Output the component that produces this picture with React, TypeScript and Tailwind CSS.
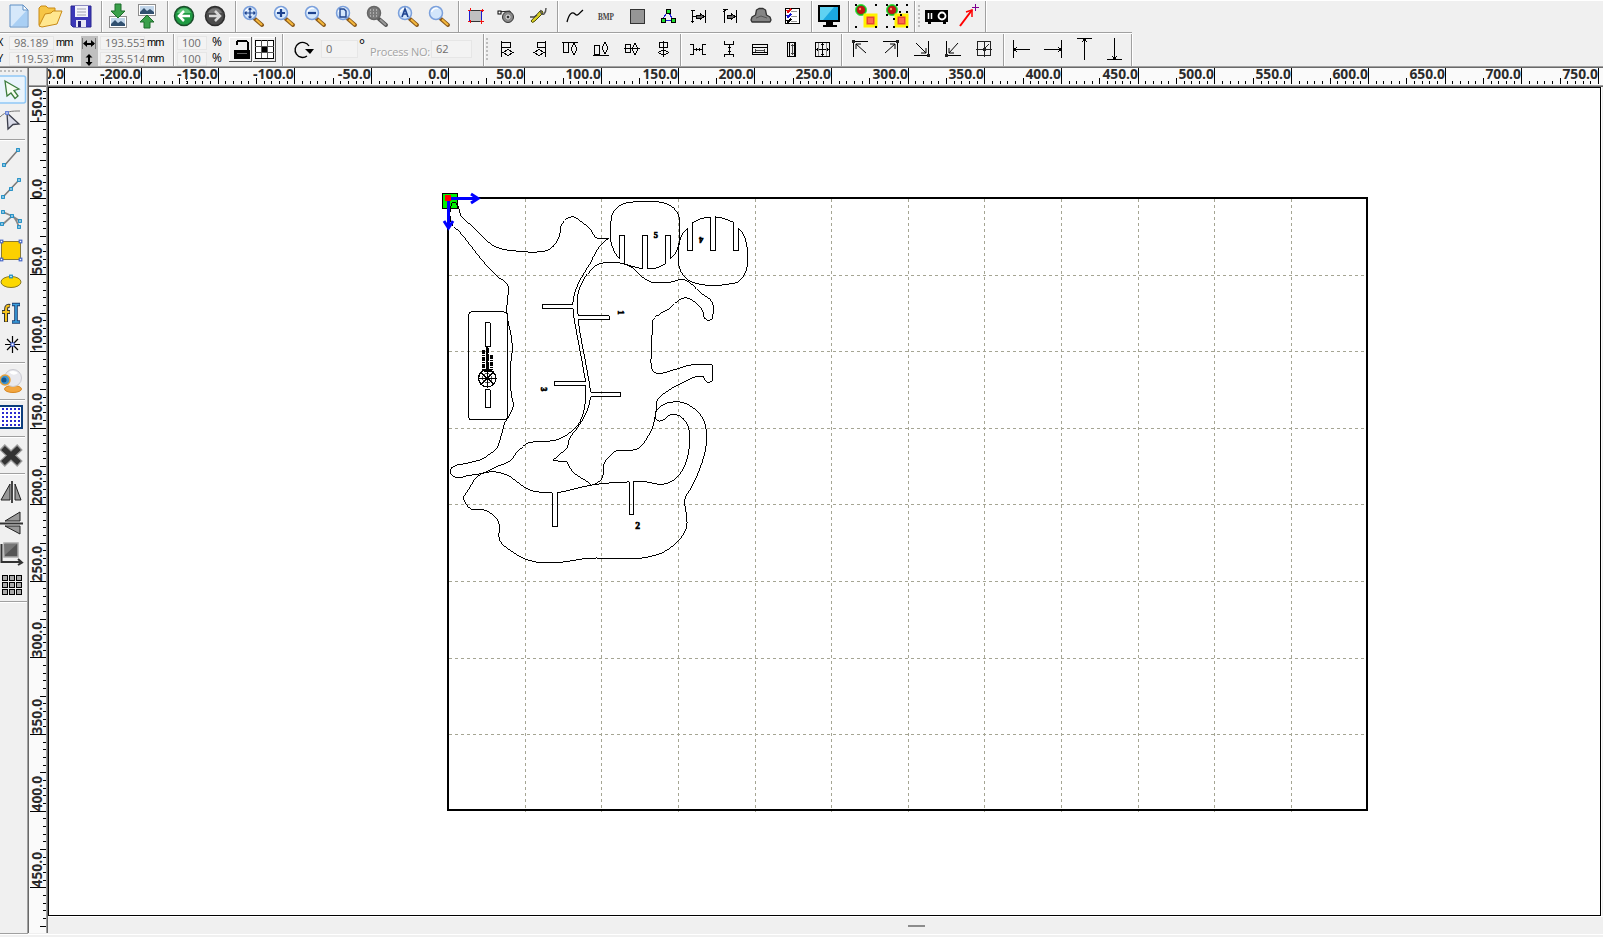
import type { ReactNode } from "react";

type Pt = [number, number];

/* Smooth closed outline through the points; sharp turns stay sharp. */
function outline(src: string): string {
  const p: Pt[] = src.trim().split(/\s+/).map((s) => s.split(",").map(Number) as Pt);
  const n = p.length;
  const dir: (Pt | null)[] = p.map((c, i) => {
    const a = p[(i - 1 + n) % n];
    const b = p[(i + 1) % n];
    const ux = c[0] - a[0], uy = c[1] - a[1], vx = b[0] - c[0], vy = b[1] - c[1];
    const lu = Math.hypot(ux, uy) || 1, lv = Math.hypot(vx, vy) || 1;
    const dot = (ux * vx + uy * vy) / (lu * lv);
    if (dot < 0.6) return null;
    const tx = ux / lu + vx / lv, ty = uy / lu + vy / lv;
    const lt = Math.hypot(tx, ty) || 1;
    return [tx / lt, ty / lt];
  });
  let d = `M${p[0][0]},${p[0][1]}`;
  for (let i = 0; i < n; i++) {
    const a = p[i], b = p[(i + 1) % n], da = dir[i], db = dir[(i + 1) % n];
    const l = Math.hypot(b[0] - a[0], b[1] - a[1]) / 3;
    const c1: Pt = da ? [a[0] + da[0] * l, a[1] + da[1] * l] : a;
    const c2: Pt = db ? [b[0] - db[0] * l, b[1] - db[1] * l] : b;
    d += `C${c1[0]},${c1[1]} ${c2[0]},${c2[1]} ${b[0]},${b[1]}`;
  }
  return d + "Z";
}

const PARTS = [
  "33,62 30,85 36,115 60,140 100,190 140,240 175,275 195,288 205,303 202,345 201,380 205,410 214,450 217,495 212,535 211,585 215,630 220,660 205,695 195,710 188,735 178,770 173,785 150,805 128,820 80,833 40,843 31,853 32,866 55,877 80,871 130,862 170,843 212,825 235,795 265,772 300,768 350,763 385,745 415,717 432,675 437,635 437,601 343,601 343,587 437,587 425,520 410,440 403,403 400,370 307,370 307,358 398,358 405,320 425,275 450,235 470,195 490,170 508,158 470,157 450,130 420,105 400,94 380,100 362,125 361,140 350,170 330,190 312,197 225,196 170,185 140,165 100,125 62,88 55,62 45,50 36,52",
  "415,391 413,330 430,285 455,250 485,233 545,233 575,245 600,268 630,288 660,292 700,288 722,282 740,285 780,320 817,350 817,400 805,406 792,395 788,375 765,350 740,337 720,342 690,368 640,402 637,440 634,500 639,555 650,563 700,553 755,538 817,538 817,585 807,592 797,585 790,572 765,574 740,585 685,615 650,647 650,665 645,695 638,725 620,760 600,785 582,793 530,796 510,810 492,835 488,875 470,893 455,899 440,887 400,860 380,828 338,825 355,810 382,785 388,760 410,730 430,700 447,660 452,633 542,633 542,620 452,620 447,585 435,520 420,440 415,403 508,403 508,391",
  "352,922 400,911 450,899 510,892 568,889 568,988 580,988 580,889 620,889 665,896 695,887 720,865 740,825 748,785 748,735 735,705 715,689 690,688 672,702 657,707 646,695 648,680 665,660 700,649 735,653 775,680 795,715 799,775 785,835 755,905 734,943 737,970 740,1025 720,1060 670,1100 620,1115 560,1120 440,1118 400,1125 330,1132 270,1125 215,1097 180,1065 177,1015 165,993 130,972 95,971 78,955 70,935 90,905 110,875 130,863 165,859 205,870 240,895 270,913 310,921 337,922 337,1024 352,1024",
  "538,219 522,195 512,160 513,110 520,80 545,57 580,49 655,49 695,62 716,90 719,130 718,170 705,205 692,219 692,149 676,149 676,234 650,247 622,250 622,149 608,149 608,250 580,243 553,234 553,149 538,149",
  "743,127 725,150 716,190 717,240 735,275 775,295 870,295 900,285 920,250 922,190 910,145 895,127 895,196 880,196 880,110 850,98 826,94 826,196 811,196 811,94 785,99 757,112 757,196 743,196",
  "136,412 151,412 151,484 136,484",
  "136,613 151,613 151,667 136,667",
];

const FONT = "'Open Sans','Noto Sans',sans-serif";

function labelWidth(s: string) {
  let w = 0;
  for (const c of s) w += c === "." ? 4 : c === "-" ? 5.5 : 7.9;
  return w;
}

function Ruler({ vertical }: { vertical?: boolean }) {
  const origin = vertical ? 198 : 448;
  const start = vertical ? 87 : 48;
  const size = vertical ? 846 : 1555;
  const step = vertical ? 7.66 : 7.667;
  const last = vertical ? 95 : 150;
  const ticks: ReactNode[] = [];
  for (let i = -60; i <= last; i++) {
    const p = Math.floor(origin + i * step + 0.3) - start;
    if (p < -1 || p > size + 50) continue;
    const len = i % 10 === 0 ? 16 : i % 5 === 0 ? 6 : 3;
    ticks.push(
      vertical ? (
        <rect key={i} x={17 - len} y={p} width={len} height={1} />
      ) : (
        <rect key={i} x={p} y={16 - len} width={1} height={len} />
      )
    );
    if (i % 10 === 0) {
      const s = (i * 5).toFixed(1);
      const w = labelWidth(s);
      ticks.push(
        vertical ? (
          <text key={`t${i}`} transform={`translate(12.5 ${p + 0.5}) rotate(-90)`} textLength={w} lengthAdjust="spacingAndGlyphs" fill="#2b2b2b">{s}</text>
        ) : (
          <text key={`t${i}`} x={p - w} y={11} textLength={w} lengthAdjust="spacingAndGlyphs" fill="#2b2b2b">{s}</text>
        )
      );
    }
  }
  return (
    <svg width={vertical ? 17 : 1555} height={vertical ? 846 : 17} className="block shrink-0 bg-[#fafafa]" fontFamily={FONT} fontSize="13.5" fontWeight="700" fill="#000">
      {ticks}
      {!vertical && <path d="M138.5 1V17" stroke="#333" strokeDasharray="1 1" />}
    </svg>
  );
}

/* ---------- toolbar pieces ---------- */

function Ico({ children, crisp }: { children: ReactNode; crisp?: boolean }) {
  return (
    <svg width="31" height="31" viewBox="-15 -15 31 31" className="block shrink-0" fill="none" stroke="#000" shapeRendering={crisp ? "crispEdges" : "auto"}>
      {children}
    </svg>
  );
}

function Side({ children, crisp }: { children: ReactNode; crisp?: boolean }) {
  return (
    <svg width="27" height="31" viewBox="-12 -15 27 31" className="block shrink-0" fill="none" stroke="#000" shapeRendering={crisp ? "crispEdges" : "auto"}>
      {children}
    </svg>
  );
}

function Sep() {
  return <div className="h-full w-[2px] shrink-0 border-l border-[#a0a0a0] bg-white" />;
}

function HSep() {
  return <div className="mt-[2px] mb-[2px] h-[2px] w-[25px] shrink-0 border-t border-[#a0a0a0] bg-white" />;
}

function Grip() {
  return (
    <svg width="4" height="31" className="block shrink-0">
      {[4, 8, 12, 16, 20, 24].map((y) => (
        <rect key={y} x="1" y={y} width="2" height="2" fill="#bdbdbd" />
      ))}
    </svg>
  );
}

function Lens({ gray, children }: { gray?: boolean; children?: ReactNode }) {
  return (
    <Ico>
      <path d="M2 3L9 9" stroke={gray ? "#555" : "#8b5a1a"} strokeWidth="4" strokeLinecap="round" />
      <path d="M3 3.500L9 9" stroke={gray ? "#999" : "#f5b83c"} strokeWidth="2" />
      <circle cx="-3" cy="-3" r="6.500" fill={gray ? "#7a7a7a" : "#d3e6fb"} stroke={gray ? "#666" : "#7ba0dc"} strokeWidth="1.500" />
      {!gray && <path d="M-7.500 -4A5 5 0 0 1 -1 -7.500" stroke="#fff" strokeWidth="1.300" />}
      {children}
    </Ico>
  );
}

function Photo({ y }: { y: number }) {
  return (
    <g transform={`translate(0 ${y})`} stroke="none">
      <rect x="-9" y="0" width="18" height="12" fill="#8d8d8d" />
      <rect x="-8" y="1" width="16" height="10" fill="#fff" />
      <rect x="-7" y="2" width="14" height="8" fill="#c2d6ea" />
      <path d="M-7 10V8L-3 4L0 7L3 5L7 8V10Z" fill="#31506f" />
    </g>
  );
}

function Cluster({ mark }: { mark?: boolean }) {
  return (
    <Ico>
      <circle cx="-5" cy="-6" r="5.500" fill="#17a51c" stroke="#3fe03f" />
      <circle cx="-5" cy="-6" r="4" fill="#c01313" stroke="none" />
      <circle cx="-6" cy="-7" r="1.200" fill="#ff8d6a" stroke="none" />
      <rect x="-1" y="-1" width="11" height="11" fill="#e8413a" stroke="#fff200" strokeWidth="3" />
      <rect x="2" y="2" width="5" height="5" fill="#ff6a50" stroke="none" />
      <g fill="#000" stroke="none">
        <path d="M-11 -12h2v2h-2zM9 -12h2v2h-2zM-11 10h2v2h-2zM9 10h2v2h-2z" />
        {mark && <path d="M-1 -12h2v2h-2zM-11 -2h2v2h-2zM-4 2h2v2h-2zM2 -5h2v2h-2zM9 -5h2v2h-2zM-4 10h2v2h-2zM3 -2h2v2h-2z" />}
      </g>
    </Ico>
  );
}

const Diamond = ({ x, y, rx, ry }: { x: number; y: number; rx: number; ry: number }) => (
  <path d={`M${x - rx} ${y}L${x} ${y - ry}L${x + rx} ${y}L${x} ${y + ry}Z`} />
);

function Field({ className, children }: { className: string; children: ReactNode }) {
  return (
    <div className={`overflow-hidden border border-[#e6e6e6] bg-[#f3f3f3] whitespace-nowrap text-[#6d6d6d] ${className}`}>{children}</div>
  );
}

function TopBar() {
  return (
    <div className="flex h-[31px] shrink-0">
      <div className="flex w-[101px] shrink-0 pl-[4px]">
        <Ico>
          <path d="M-9 -11H4L9 -6V11H-9Z" fill="#d6e8fa" stroke="#5f8fc4" />
          <path d="M-7 10L8 -6V10Z" fill="#a9cff4" stroke="none" />
          <path d="M4 -11V-6H9Z" fill="#fff" stroke="#5f8fc4" />
        </Ico>
        <Ico>
          <path d="M-11 9V-8L-9 -10H-4L-2 -8H5V-4" fill="#f6c545" stroke="#c88a17" />
          <path d="M-11 10L-5 -2L1 -3L3 -5H12L7 8L-8 11Z" fill="#ffe78f" stroke="#c88a17" />
        </Ico>
        <Ico>
          <path d="M-10 -10H10V11H-8L-10 9Z" fill="#3c38b8" stroke="#2a2790" />
          <rect x="-6" y="-10" width="13" height="11" fill="#f4f4fb" stroke="none" />
          <path d="M-4 -7H5M-4 -4H5M-4 -1H5" stroke="#9f9fae" />
          <rect x="-5" y="4" width="10" height="7" fill="#e8e8f4" stroke="none" />
          <rect x="-3" y="5" width="3" height="6" fill="#23207a" stroke="none" />
        </Ico>
      </div>
      <Sep />
      <div className="flex w-[64px] shrink-0">
        <div className="-mr-[2px]">
          <Ico>
            <Photo y={0} />
            <path d="M-3 -12H3V-5H7L0 2L-7 -5H-3Z" fill="#3aa04a" stroke="#1d6d2a" />
          </Ico>
        </div>
        <Ico>
          <Photo y={-12} />
          <path d="M-3 12H3V6H7L0 -1L-7 6H-3Z" fill="#3aa04a" stroke="#1d6d2a" />
        </Ico>
      </div>
      <Sep />
      <div className="flex w-[66px] shrink-0">
        <Ico>
          <circle cx="0" cy="0" r="9.500" fill="#1f9a42" stroke="#1b4d2b" strokeWidth="1.500" />
          <path d="M-7 -3A7.500 7.500 0 0 1 7 -3Z" fill="#5cc477" stroke="none" />
          <path d="M6 0H-5M0 -5L-5 0L0 5" stroke="#fff" strokeWidth="2.500" />
        </Ico>
        <Ico>
          <circle cx="0" cy="0" r="9.500" fill="#4c4c4c" stroke="#2d2d2d" strokeWidth="1.500" />
          <path d="M-7 -3A7.500 7.500 0 0 1 7 -3Z" fill="#777" stroke="none" />
          <path d="M-6 0H5M0 -5L5 0L0 5" stroke="#d8d8d8" strokeWidth="2.500" />
        </Ico>
      </div>
      <Sep />
      <div className="flex w-[221px] shrink-0 pl-[1px]">
        <Lens><path d="M-3 -8V2M-8 -3H2M-4.500 -6.500L-3 -8L-1.500 -6.500M-4.500 .5L-3 2L-1.500 .5M-6.500 -4.500L-8 -3L-6.500 -1.500M.5 -4.500L2 -3L.5 -1.500" stroke="#1d4390" strokeWidth="1.200" /></Lens>
        <Lens><path d="M-3 -7V1M-7 -3H1" stroke="#1d4390" strokeWidth="2.200" /></Lens>
        <Lens><path d="M-7 -3H1" stroke="#1d4390" strokeWidth="2.200" /></Lens>
        <Lens><path d="M-6 -7H-2L0 -5V1H-6Z" stroke="#1d4390" strokeWidth="1.400" /></Lens>
        <Lens gray><path d="M-7 -6H2M-7 -3H2M-7 0H2" stroke="#ddd" strokeWidth="1" strokeDasharray="1 2" /></Lens>
        <Lens><path d="M-6 1L-3 -7L0 1M-5 -2H-1" stroke="#1d4390" strokeWidth="1.700" /></Lens>
        <Lens />
      </div>
      <Sep />
      <div className="flex w-[97px] shrink-0 pl-[1px]">
        <Ico crisp>
          <rect x="-6.500" y="-5.500" width="12" height="11" fill="#c0c0c0" stroke="#333" />
          <path d="M-6.500 -5V5M5.500 -5V5" stroke="#1c1cd0" />
          <path d="M-5.500 -8V-5M-8 -5.500H-5M6.500 -7V-4M4 -5.500H8M-5.500 7V4M-8 5.500H-5M5.500 4V8M4 5.500H8" stroke="#f01010" />
        </Ico>
        <Ico>
          <path d="M-9 -4L3 -5L5 3" stroke="#222" />
          <rect x="-9" y="-5" width="3" height="3" fill="#fff" />
          <circle cx="1" cy="1" r="5.500" fill="#8a8a8a" stroke="#333" />
          <circle cx="1" cy="1" r="2" fill="#333" stroke="#eee" />
        </Ico>
        <Ico>
          <path d="M-7 5L2 -5Q5 -6 5 -3L-3 5Q-6 8 -7 5Z" fill="#d8cf20" stroke="#4c4a10" />
          <path d="M3 -6C2 -3 4 -1 6 -2Q8 -4 8 -8" stroke="#555" strokeWidth="1.500" />
          <path d="M-8 1L-4 1L-1 -1" stroke="#444" strokeWidth="1.500" />
        </Ico>
      </div>
      <Sep />
      <div className="flex w-[252px] shrink-0 pl-[1px]">
        <Ico><path d="M-8 6C-6 -2 -3 -5 0 -2S4 -3 8 -6" strokeWidth="1.300" /></Ico>
        <Ico><text x="-8" y="4" fontFamily="'Liberation Serif',serif" fontSize="9.500" fontWeight="700" textLength="16" lengthAdjust="spacingAndGlyphs" fill="#444" stroke="none">BMP</text></Ico>
        <Ico crisp><rect x="-7" y="-7" width="14" height="14" fill="#969696" stroke="#333" /></Ico>
        <Ico crisp>
          <path d="M-6 4L0 -5L5 4Z" stroke="#2020d8" />
          <path d="M-2 -7h4v4h-4zM-7 2h4v4h-4zM3 2h4v4h-4z" fill="#20e030" />
        </Ico>
        <Ico crisp>
          <path d="M-6.500 -6V7M6.500 -6V7M-6 .5H-3M3 .5H6M-8 -5.500H-4M-8 5.500H-5" />
          <path d="M-3 -1H1V-3L5 .5L1 4V2H-3Z" fill="#666" />
        </Ico>
        <Ico crisp>
          <path d="M-5.500 -7V7M6.500 -6V7M-7 -6.500H-2M-7 -4L-3 -7" />
          <path d="M-3 -1H1V-3L5 .5L1 4V2H-3Z" fill="#666" />
        </Ico>
        <Ico>
          <path d="M-9 6L-10 4L-9 1L-5.500 -1L-4.500 -6L-2 -7.500H2L4.500 -6L5.500 -1L9 1L10 4L9 6Z" fill="#858585" stroke="#333" strokeWidth="1.300" strokeLinejoin="round" />
          <path d="M-5 2L0 0L6 2" stroke="#555" />
        </Ico>
        <Ico crisp>
          <rect x="-7" y="-8" width="14" height="15" fill="#fff" />
          <path d="M-1 -4.500H5M-1 0.500H5M-1 5H5" stroke="#999" />
          <path d="M-5 -6L-4 -4L-1 -7" stroke="#e01010" strokeWidth="1.500" />
          <path d="M-5 -1L-4 1L-1 -2" stroke="#1515d0" strokeWidth="1.500" />
          <path d="M-5 4L-4 6L-1 3" stroke="#000" strokeWidth="1.500" />
        </Ico>
      </div>
      <Sep />
      <div className="flex w-[35px] shrink-0 pl-[1px]">
        <Ico>
          <rect x="-10" y="-10" width="20" height="15" fill="#1ba8e0" strokeWidth="2" />
          <path d="M-9 -9H5L-6 4H-9Z" fill="#5fd2f2" stroke="none" />
          <path d="M-3 6H4V9H8V11H-6V9H-3Z" fill="#000" stroke="none" />
        </Ico>
      </div>
      <Sep />
      <div className="flex w-[64px] shrink-0 pl-[1px]">
        <Cluster />
        <Cluster mark />
      </div>
      <Sep />
      <div className="flex w-[69px] shrink-0 pl-[1px]">
        <Grip />
        <div className="w-[1px]" />
        <Ico>
          <path d="M-12 -6H11V6H9V8H6V6H-6V8H-9V6H-12Z" fill="#000" stroke="none" />
          <circle cx="5" cy="0" r="3.500" stroke="#fff" strokeWidth="1.800" />
          <path d="M-8.500 -3V3M-5.500 -3V3" stroke="#fff" strokeWidth="1.500" />
        </Ico>
        <Ico>
          <path d="M-8 10L4 -6" stroke="#ff0000" strokeWidth="2" />
          <path d="M-2 -4L4 -6V1" stroke="#ff0000" strokeWidth="1.500" />
          <path d="M7.500 -12V-5M4 -8.500H11" stroke="#800090" shapeRendering="crispEdges" />
        </Ico>
      </div>
      <Sep />
    </div>
  );
}

function PropertyBar() {
  return (
    <div className="flex h-[32px] shrink-0 text-[11px] leading-[12px]">
      <div className="flex w-[173px] shrink-0 pt-[2px]">
        <div className="flex w-[9px] flex-col gap-[4px]">
          <span className="-ml-[3px] text-black">X</span>
          <span className="-ml-[3px] text-black">Y</span>
        </div>
        <div className="flex flex-col gap-[2px]">
          <Field className="h-[14px] w-[45px] pl-[4px] leading-[11px]">98.189</Field>
          <Field className="h-[14px] w-[45px] pl-[5px] leading-[11px]">119.537</Field>
        </div>
        <div className="flex w-[27px] flex-col gap-[4px] pl-[2px] font-['Liberation_Sans',sans-serif] tracking-[-0.9px] text-black">
          <span>mm</span>
          <span>mm</span>
        </div>
        <svg width="17" height="30" className="block bg-[#c0c0c0]" fill="none" stroke="#000">
          <g shapeRendering="crispEdges"><path d="M1.500 2V13M14.500 2V13" stroke="#777" /><path d="M4 7.500H13" strokeWidth="2" /><path d="M8 19V28" strokeWidth="2" /></g>
          <path d="M6 4L2 7.500L6 11ZM10 4L14 7.500L10 11ZM4.500 21.500L8 18L11.500 21.500ZM4.500 26L8 30L11.500 26Z" fill="#000" stroke="none" />
        </svg>
        <div className="ml-[2px] flex flex-col gap-[2px]">
          <Field className="h-[14px] w-[45px] pl-[4px] leading-[11px]">193.553</Field>
          <Field className="h-[14px] w-[45px] pl-[4px] leading-[11px]">235.514</Field>
        </div>
        <div className="flex flex-col gap-[4px] pl-[2px] font-['Liberation_Sans',sans-serif] tracking-[-0.9px] text-black">
          <span>mm</span>
          <span>mm</span>
        </div>
      </div>
      <Sep />
      <div className="flex w-[107px] shrink-0 pt-[2px]">
        <div className="ml-[2px] flex flex-col gap-[2px]">
          <Field className="h-[14px] w-[30px] pl-[4px] leading-[11px]">100</Field>
          <Field className="h-[14px] w-[30px] pl-[4px] leading-[11px]">100</Field>
        </div>
        <div className="flex w-[22px] flex-col gap-[4px] pl-[5px] text-[12px] text-black">
          <span>%</span>
          <span>%</span>
        </div>
        <svg width="48" height="27" className="block" fill="none" stroke="#000" shapeRendering="crispEdges">
          <path d="M.5 25V1.500H22" stroke="#fff" />
          <path d="M0 25.500H22.500V1" stroke="#555" />
          <path d="M8 9V6L10 4.500H17L19 6.500V14" strokeWidth="2" />
          <rect x="5.500" y="14.500" width="15" height="8" fill="#000" />
          <path d="M8 17.500H18" stroke="#666" />
          <path d="M24.500 25V1.500H46" stroke="#fff" />
          <path d="M24 25.500H46.500V1" stroke="#555" />
          <rect x="26.500" y="4.500" width="18" height="18" fill="#fff" />
          <path d="M32.500 4V22M38.500 4V22M26 10.500H45M26 16.500H45" stroke="#555" />
          <rect x="33" y="11" width="5" height="5" fill="#000" stroke="none" />
        </svg>
      </div>
      <Sep />
      <div className="flex w-[199px] shrink-0 items-start">
        <svg width="37" height="32" className="block shrink-0" fill="none" stroke="#000">
          <path d="M25 12A7.500 7.500 0 1 0 23 22" strokeWidth="1.400" />
          <path d="M21 15H30L26 20Z" fill="#000" stroke="none" />
        </svg>
        <Field className="mt-[6px] h-[18px] w-[37px] pt-[2px] pl-[4px]">0</Field>
        <span className="mt-[5px] w-[12px] pl-[1px] text-[14px] text-black">°</span>
        <span className="mt-[12px] w-[61px] text-[11px] tracking-[-0.2px] whitespace-nowrap text-[#a3a3a3] [text-shadow:1px_1px_0_#fff]">Process NO:</span>
        <Field className="mt-[6px] h-[18px] w-[41px] pt-[2px] pl-[4px]">62</Field>
      </div>
      <Sep />
      <div className="flex w-[195px] shrink-0">
        <Grip />
        <div className="w-[4px]" />
        <Ico crisp><path d="M-6.500 -8V8M-6 -6.500H2.500V-1.500H-6" /><Diamond x={0} y={3.5} rx={5} ry={3} /></Ico>
        <Ico crisp><path d="M6.500 -8V8M6 -6.500H-1.500V-1.500H6" /><Diamond x={0} y={3.5} rx={5} ry={3} /></Ico>
        <Ico crisp><path d="M-8 -6.500H8M-6.500 -6V3.500H-1.500V-6" /><Diamond x={4} y={0} rx={3} ry={6} /></Ico>
        <Ico crisp><path d="M-8 6.500H8M-6.500 5.500V-3.500H-1.500V5.500Z" /><Diamond x={4} y={-1} rx={3} ry={6} /></Ico>
        <Ico crisp><path d="M-8 -.5H8M-6.500 -4.500H-1.500V3.500H-6.500Z" /><Diamond x={3} y={0} rx={3} ry={6} /></Ico>
        <Ico crisp><path d="M.5 -8V8M-3.500 -6.500H4.500V-1.500H-3.500Z" /><Diamond x={0.5} y={3.5} rx={5} ry={3} /></Ico>
      </div>
      <Sep />
      <div className="flex w-[159px] shrink-0 pl-[1px]">
        <Ico crisp><path d="M-8 -4.500H-4.500V5.500H-8M8 -4.500H4.500V5.500H8M-4 .5H4M-1.500 -1V2M1.500 -1V2" /></Ico>
        <Ico crisp><path d="M-4.500 -8V-4.500H4.500V-8M-4.500 8V5.500H4.500V8M.5 -4V5M-1 -1.500H2M-1 2.500H2" /></Ico>
        <Ico crisp><path d="M-7.500 -4.500H7.500V5.500H-7.500ZM-7 -1.500H7M-7 3.500H7" /><path d="M-5 1.500H5M-4.500 0V3M4.500 0V3" stroke="#444" /></Ico>
        <Ico crisp><path d="M-3.500 -6.500H4.500V7.500H-3.500ZM-1.500 -6V7M3.500 -6V7" /><path d="M1.500 -5V6M0 -3.500H3M0 4.500H3" stroke="#444" /></Ico>
        <Ico crisp><path d="M-6.500 -6.500H7.500V7.500H-6.500ZM-6 .5H7M.5 -6V7M-1 -4.500H2M-1 5.500H2M-4.500 -1V2M5.500 -1V2" /><path d="M-3.500 -6V7M4.500 -6V7" stroke="#888" /></Ico>
      </div>
      <Sep />
      <div className="flex w-[160px] shrink-0 pl-[2px]">
        <Ico><path d="M-6.500 8V-7.500H8M6 4L-4 -5M-4 0V-5H1" /><rect x="-8" y="-9" width="3" height="3" fill="#222" stroke="none" /></Ico>
        <Ico><path d="M6.500 8V-7.500H-8M-6 4L4 -5M4 0V-5H-1" /><rect x="5" y="-9" width="3" height="3" fill="#222" stroke="none" /></Ico>
        <Ico><path d="M6.500 -8V6.500H-8M-6 -6L4 4M4 -1V4H-1" /><rect x="5" y="5" width="3" height="3" fill="#222" stroke="none" /></Ico>
        <Ico><path d="M-6.500 -8V6.500H8M5 -6L-4 4M-4 -1V4H1" /><rect x="-8" y="5" width="3" height="3" fill="#222" stroke="none" /></Ico>
        <Ico crisp><path d="M-6.500 -7.500H6.500V6.500H-6.500ZM-8 0.500H8M.5 -8V8M0 0L5 -5" stroke="#222" /><rect x="-1" y="-1" width="3" height="3" fill="#222" stroke="none" /></Ico>
      </div>
      <Sep />
      <div className="flex w-[126px] shrink-0 pl-[1px]">
        <Ico crisp><path d="M-7.500 -9V9M-7 .5H9M-4 -2L-7 .5L-4 3" /></Ico>
        <Ico crisp><path d="M9.500 -9V9M-8 .5H9M6 -2L9 .5L6 3" /></Ico>
        <Ico crisp><path d="M-6 -10.500H9M1.500 -10V11M-1 -7L1.500 -10L4 -7" /></Ico>
        <Ico crisp><path d="M-7 10.500H8M.5 -11V10M-2 7L.5 10L3 7" /></Ico>
      </div>
      <Sep />
    </div>
  );
}

const NODE = { fill: "#fff", stroke: "#168ac4", strokeWidth: 1.2 };
function Node({ x, y, c }: { x: number; y: number; c?: string }) {
  return <rect x={x - 1.3} y={y - 1.3} width="2.600" height="2.600" {...NODE} stroke={c ?? NODE.stroke} />;
}

function SideBar() {
  return (
    <div className="flex w-[27px] shrink-0 flex-col overflow-hidden">
      <svg width="27" height="6" className="block shrink-0">
        {[0, 4, 8, 12, 16, 20].map((x) => (
          <rect key={x} x={x} y="2" width="2" height="2" fill="#bdbdbd" />
        ))}
      </svg>
      <Side>
        <rect x="-18" y="-13" width="31.500" height="27" rx="2" fill="#eaf4fc" stroke="#90c8f6" strokeWidth="1.500" />
        <path d="M-7 -8L7 0L2 1.500L6 7L3 9.500L-1 4L-5 7Z" fill="#f6fdf2" stroke="#3d7d3d" strokeWidth="1.300" />
      </Side>
      <Side>
        <path d="M-12 -3C-6 -9 0 -9 8 -9" stroke="#777" />
        <path d="M-5 -7L7 4L1 4.500L-4 9Z" fill="#d9dbe8" stroke="#3c3f4c" strokeWidth="1.300" />
        <Node x={-5} y={-7} c="#5a7ad8" />
      </Side>
      <div className="mt-[3px] mb-[2px] h-[2px] w-[25px] shrink-0 border-t border-[#a0a0a0] bg-white" />
      <Side><path d="M-8 8L6 -8" stroke="#777" strokeWidth="1.500" /><Node x={-8} y={7} /><Node x={6} y={-8} /></Side>
      <Side><path d="M-9 8L7 -9" stroke="#777" strokeWidth="1.500" /><Node x={-9} y={8} /><Node x={-1} y={0} /><Node x={7} y={-9} /></Side>
      <Side>
        <path d="M-9 -8L0 -4L8 1M-10 5L0 -4C4 -2 5 2 7 7" stroke="#888" strokeWidth="1.800" />
        <Node x={-9} y={-8} /><Node x={0} y={-4} /><Node x={8} y={1} /><Node x={-10} y={4} /><Node x={7} y={7} />
      </Side>
      <Side>
        <rect x="-10.500" y="-9.500" width="19" height="18" fill="#fcd000" stroke="#8a7a30" />
        <Node x={-10.5} y={-9.500} c="#4668c8" /><Node x={8.500} y={-9.500} c="#4668c8" /><Node x={-10.500} y={8.500} c="#4668c8" /><Node x={8.500} y={8.500} c="#4668c8" />
      </Side>
      <Side><ellipse cx="-1" cy="0" rx="10" ry="5.500" fill="#fcd800" stroke="#8a7a20" /><Node x={-1} y={-5.500} /></Side>
      <Side>
        <path d="M-2 -7C-6 -8 -6 -5 -6 -1V9M-10 -1H-2" stroke="#333" strokeWidth="4" />
        <path d="M-2.500 -7C-6 -8 -6 -5 -6 -1V8.500M-9.500 -1H-2.500" stroke="#f6c21c" strokeWidth="2" />
        <path d="M0 -8.500H8M0 9H8M4 -8V9" stroke="#1b3d70" strokeWidth="3.600" />
        <path d="M.5 -8.500H7.500M.5 9H7.500M4 -8V9" stroke="#3aa0e0" strokeWidth="1.600" />
      </Side>
      <Side>
        <path d="M.5 -8V9M-7 .5H8M-5 -5L6 6M6 -5L-5 6" strokeWidth="1.200" />
        <rect x="-1" y="-1" width="3" height="3" fill="#fff" stroke="#4668e8" />
      </Side>
      <HSep />
      <Side>
        <ellipse cx="1" cy="8" rx="8.500" ry="3.500" fill="#f2a640" stroke="#d88720" />
        <circle cx="1" cy="-3" r="8.500" fill="#e9e9ee" stroke="#c9c9d0" />
        <path d="M-3 -9A8 8 0 0 1 6 -8Q1 -4 -3 -9Z" fill="#fff" stroke="none" />
        <circle cx="-7" cy="-1" r="5" fill="#3f94cf" stroke="#e8a03a" strokeWidth="1.500" />
        <circle cx="-8" cy="-1" r="2.500" fill="#15568f" stroke="none" />
      </Side>
      <HSep />
      <Side crisp>
        <rect x="-13" y="-12" width="23" height="22" fill="#fff" stroke="#0b3d7c" strokeWidth="2" />
        {[-9, -5, -1, 3, 7].map((y) => <path key={y} d={`M-10 ${y}H8`} stroke="#2a2ad0" strokeWidth="2" strokeDasharray="2 2" />)}
      </Side>
      <HSep />
      <Side>
        <path d="M-10 -8L8 9M8 -8L-10 9" stroke="#9a9a9a" strokeWidth="8" />
        <path d="M-9 -7L7 8M7 -7L-9 8" stroke="#333" strokeWidth="5.500" />
      </Side>
      <HSep />
      <Side>
        <path d="M-2 -8V8H-11ZM3 -8V8H9Z" fill="#999" stroke="#222" />
        <path d="M0 -11V11" stroke="#444" strokeWidth="2" />
      </Side>
      <Side>
        <path d="M8 -2V-11L-7 -2ZM8 3V11L-7 3Z" fill="#999" stroke="#222" />
        <path d="M-12 .5H11" stroke="#333" strokeWidth="2" />
      </Side>
      <Side>
        <rect x="-8" y="-11" width="14" height="14" fill="#555" stroke="#aaa" strokeWidth="1.500" />
        <path d="M-8 -10H5L-7 1Z" fill="#777" stroke="none" />
        <path d="M-10.500 -10V8H9M6 5L10 8.500L6 11" stroke="#333" strokeWidth="2" />
      </Side>
      <Side crisp>
        {[-10, -3, 4].map((x) => [-10, -3, 4].map((y) => <rect key={`${x},${y}`} x={x + 0.5} y={y + 0.5} width="5" height="5" fill="#aaa" />))}
      </Side>
      <div className="h-[2px] shrink-0 border-t border-[#a0a0a0] bg-white" />
    </div>
  );
}

function Canvas() {
  const vx = Array.from({ length: 11 }, (_, i) => Math.floor(448.6 + (i + 1) * 76.6) + 0.5);
  const hy = Array.from({ length: 7 }, (_, i) => Math.floor(198.5 + (i + 1) * 76.6) + 0.5);
  return (
    <svg width="1553" height="829" viewBox="48 87 1553 829" className="block shrink-0 bg-white" fill="none" stroke="#000" shapeRendering="crispEdges">
      <rect x="48.500" y="87.500" width="1552" height="828" />
      <g stroke="#a5a593" strokeDasharray="3 3">
        {vx.map((x) => <path key={x} d={`M${x} 199V812`} />)}
        {hy.map((y) => <path key={y} d={`M449 ${y}H1366`} />)}
      </g>
      <rect x="448" y="198" width="919" height="612" strokeWidth="2" />
      <rect x="442.500" y="193.500" width="15" height="15" fill="#00f000" />
      <g transform="translate(439.900 185.600) scale(.33333)" strokeWidth="3">
        {PARTS.map((p, i) => <path key={i} d={outline(p)} />)}
        <rect x="86" y="379" width="116" height="324" rx="9" />
        <circle cx="142" cy="578" r="26" strokeWidth="4" />
        <circle cx="142" cy="578" r="14" strokeWidth="2" />
        <path d="M142 550V606M116 578H168M123 560L161 596M161 560L123 596" strokeWidth="4" />
        <path d="M132 556H152M142 484V555" strokeWidth="6" />
        <path d="M130 493V553M155 508V552" strokeWidth="8" strokeDasharray="5 2" />
        <path d="M143 488V552" strokeWidth="9" strokeDasharray="7 1" />
        <g fill="#000" stroke="#000" strokeWidth="2" fontFamily="'Liberation Serif',serif" fontWeight="700" fontSize="25" textAnchor="middle">
          <text transform="translate(648 157)">5</text>
          <text transform="translate(784 154) rotate(180)">4</text>
          <text transform="translate(533 381) rotate(90)">1</text>
          <text transform="translate(303 611) rotate(90)">3</text>
          <text transform="translate(593 1031)" fontSize="29">2</text>
        </g>
      </g>
      <g stroke="#0000ff" strokeWidth="3" shapeRendering="auto">
        <path d="M449 198.500H478M471 194L478 198.500L471 203" />
        <path d="M448.500 199V228M444 221L448.500 228L453 221" />
      </g>
      <rect x="445" y="195" width="6" height="6" fill="#ff0000" stroke="none" />
    </svg>
  );
}

export default function App() {
  return (
    <div className="flex h-[937px] w-[1603px] flex-col overflow-hidden bg-[#f0f0f0] font-['Open_Sans','Noto_Sans',sans-serif] text-[#222]">
      <div className="h-[1px] shrink-0 bg-white" />
      <TopBar />
      <div className="h-[2px] w-[1132px] shrink-0 border-t border-[#a0a0a0] bg-white" />
      <PropertyBar />
      <div className="h-[1px] shrink-0 bg-[#a0a0a0]" />
      <div className="h-[1px] shrink-0 bg-[#696969]" />
      <div className="flex h-[865px] shrink-0">
        <SideBar />
        <div className="w-[2px] shrink-0 border-r border-[#696969] bg-[#a0a0a0]" />
        <div className="flex w-[17px] shrink-0 flex-col">
          <div className="h-[17px] shrink-0 bg-[#f0f0f0]" />
          <div className="h-[2px] shrink-0 border-b border-[#696969] bg-[#a0a0a0]" />
          <Ruler vertical />
        </div>
        <div className="w-[2px] shrink-0 border-r border-[#696969] bg-[#a0a0a0]" />
        <div className="flex flex-1 flex-col overflow-hidden">
          <Ruler />
          <div className="h-[2px] shrink-0 border-b border-[#696969] bg-[#a0a0a0]" />
          <div className="flex shrink-0 border-b border-white">
            <Canvas />
            <div className="w-[1px] bg-white" />
          </div>
          <div className="flex flex-1 items-start pt-[8px] pl-[860px]">
            <div className="h-[2px] w-[17px] bg-[#8c8c8c]" />
          </div>
        </div>
      </div>
      <div className="h-[1px] w-[28px] shrink-0 bg-[#a0a0a0]" />
      <div className="h-[1px] shrink-0 bg-white" />
    </div>
  );
}
